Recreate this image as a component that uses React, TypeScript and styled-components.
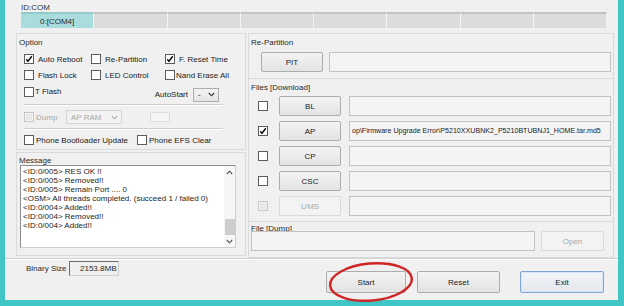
import React from 'react';
import styled, { createGlobalStyle } from 'styled-components';

const Global = createGlobalStyle`
  html, body { margin: 0; padding: 0; background: #f0f0f0; }
  body {
    width: 624px; height: 306px; overflow: hidden;
    font-family: "Liberation Sans", Arial, sans-serif;
    font-size: 8px; color: #1b1b1b;
  }
  * { box-sizing: border-box; }
`;

const TEAL = '#41c6c8';

const Frame = styled.div`
  width: 624px;
  height: 306px;
  border-left: 5px solid ${TEAL};
  border-right: 6px solid ${TEAL};
  border-bottom: 6px solid ${TEAL};
  background: #f0f0f0;
  display: flex;
  flex-direction: column;
  line-height: 9px;
`;

const Top = styled.div`
  height: 28px;
  padding: 3px 0 0 16px;
  display: flex;
  flex-direction: column;
`;

const SmallLabel = styled.div`
  height: 9px;
  line-height: 9px;
  color: #333;
`;

const ComRow = styled.div`
  display: grid;
  grid-template-columns: repeat(8, 1fr);
  width: 586px;
  height: 16px;
`;

const ComCell = styled.div<{ $active?: boolean }>`
  background: ${p => (p.$active ? '#a9dcdc' : '#dcdcdc')};
  border-top: 2px solid ${p => (p.$active ? '#94c9c9' : '#c2c2c2')};
  border-right: 1px solid #f4f4f4;
  display: flex;
  align-items: center;
  justify-content: center;
  color: #2a2a2a;
`;

const Main = styled.div`
  display: grid;
  grid-template-columns: 230px 366px;
  column-gap: 2px;
  padding-left: 11px;
  padding-top: 5px;
  height: 230px;
`;

const Column = styled.div`
  display: flex;
  flex-direction: column;
`;

const Panel = styled.div<{ $h: number; $pt?: number; $mt?: number; $noTop?: boolean }>`
  height: ${p => p.$h}px;
  margin-top: ${p => p.$mt ?? 0}px;
  border: 1px solid #dadada;
  ${p => (p.$noTop ? 'border-top: none;' : '')}
  padding: ${p => p.$pt ?? 4}px 2px 0 2px;
  display: flex;
  flex-direction: column;
`;

const PanelTitle = styled.div`
  height: 9px;
  line-height: 9px;
  color: #2a2a2a;
`;

const OptBody = styled.div`
  padding: 0 20px 0 5px;
  display: flex;
  flex-direction: column;
`;

const OptGrid = styled.div`
  margin-top: 4px;
  display: grid;
  grid-template-columns: 67px 74px minmax(0, 1fr);
  grid-template-rows: 16px 16px 17px;
  align-items: center;
`;

const CheckItem = styled.label<{ $gap?: number; $disabled?: boolean; $w?: number }>`
  display: flex;
  align-items: center;
  gap: ${p => p.$gap ?? 4}px;
  white-space: nowrap;
  color: ${p => (p.$disabled ? '#a6a6a6' : '#1b1b1b')};
  ${p => (p.$w ? `width: ${p.$w}px; flex: none;` : '')}
`;

const Box = styled.span<{ $disabled?: boolean }>`
  width: 10px;
  height: 10px;
  flex: none;
  border: 1px solid ${p => (p.$disabled ? '#c6c6c6' : '#5c5c5c')};
  background: ${p => (p.$disabled ? '#e8e8e8' : '#fff')};
  box-shadow: ${p => (p.$disabled ? 'inset 0 0 0 1px #f4f4f4' : 'none')};
  display: inline-flex;
  align-items: center;
  justify-content: center;
`;

function Check({ checked, disabled }: { checked?: boolean; disabled?: boolean }) {
  return (
    <Box $disabled={disabled}>
      {checked && (
        <svg width="8" height="8" viewBox="0 0 8 8">
          <path d="M1.2 4.2 L3 6.2 L6.8 1.2" stroke="#111" strokeWidth="1.5" fill="none" />
        </svg>
      )}
    </Box>
  );
}

const AutoStartWrap = styled.div`
  grid-column: 2 / 4;
  justify-self: end;
  display: flex;
  align-items: center;
  gap: 5px;
  margin-right: 4px;
  margin-top: 6px;
`;

const Select = styled.div<{ $w: number; $disabled?: boolean }>`
  width: ${p => p.$w}px;
  height: 14px;
  border: 1px solid ${p => (p.$disabled ? '#d6d6d6' : '#acacac')};
  background: ${p => (p.$disabled ? '#f2f2f2' : 'linear-gradient(#f4f4f4, #e4e4e4)')};
  color: ${p => (p.$disabled ? '#a8a8a8' : '#1b1b1b')};
  display: flex;
  align-items: center;
  justify-content: space-between;
  padding: 0 3px 0 4px;
`;

const Chevron = ({ color = '#333' }: { color?: string }) => (
  <svg width="7" height="5" viewBox="0 0 7 5">
    <path d="M0.8 1 L3.5 3.8 L6.2 1" stroke={color} strokeWidth="1.1" fill="none" />
  </svg>
);

const Sep = styled.div`
  height: 2px;
  border-top: 1px solid #cdcdcd;
  border-bottom: 1px solid #ffffff;
  margin-top: 4px;
`;

const Row = styled.div<{ $h?: number; $mt?: number }>`
  display: flex;
  align-items: center;
  height: ${p => p.$h ?? 14}px;
  margin-top: ${p => p.$mt ?? 0}px;
`;

const EmptyBox = styled.div`
  width: 20px;
  height: 10px;
  margin-left: 28px;
  border: 1px solid #dedede;
  background: #f4f4f4;
`;

const MsgBox = styled.div`
  margin: 0 0 0 1px;
  width: 216px;
  height: 83px;
  border: 1px solid #8d8d8d;
  border-right-color: #cfcfcf;
  border-bottom-color: #cfcfcf;
  background: #fff;
  display: flex;
`;

const MsgText = styled.div`
  flex: 1;
  padding: 1px 0 0 2px;
  line-height: 9px;
  white-space: nowrap;
  overflow: hidden;
  color: #1e1e1e;
`;

const ScrollBar = styled.div`
  width: 11px;
  background: #f6f6f6;
  display: flex;
  flex-direction: column;
  align-items: center;
  justify-content: space-between;
  padding: 4px 0 3px;
`;

const Thumb = styled.div`
  width: 10px;
  height: 16px;
  background: #cdcdcd;
  margin-top: auto;
  margin-bottom: 4px;
`;

const BtnRow = styled.div<{ $pl: number; $mt?: number }>`
  display: flex;
  align-items: center;
  padding-left: ${p => p.$pl}px;
  margin-top: ${p => p.$mt ?? 0}px;
  height: 20px;
`;

const Button = styled.div<{ $w: number; $h?: number; $disabled?: boolean; $default?: boolean; $ml?: number }>`
  width: ${p => p.$w}px;
  height: ${p => p.$h ?? 20}px;
  margin-left: ${p => p.$ml ?? 0}px;
  flex: none;
  border: 1px solid ${p => (p.$disabled ? '#d9d9d9' : p.$default ? '#7fa6d2' : '#adadad')};
  border-radius: 2px;
  background: ${p =>
    p.$disabled
      ? '#f3f3f3'
      : p.$default
      ? 'linear-gradient(#f2f5f8, #e3e8ee)'
      : 'linear-gradient(#f3f3f3, #e3e3e3)'};
  box-shadow: ${p => (p.$default ? 'inset 0 0 0 1px #d6e6f6' : 'none')};
  color: ${p => (p.$disabled ? '#a8a8a8' : '#1b1b1b')};
  display: flex;
  align-items: center;
  justify-content: center;
  position: relative;
`;

const Field = styled.div<{ $w: number; $ml: number }>`
  width: ${p => p.$w}px;
  height: 20px;
  margin-left: ${p => p.$ml}px;
  border: 1px solid #c3c3c3;
  background: #f4f4f4;
  display: flex;
  align-items: center;
  padding-left: 2px;
  white-space: nowrap;
  overflow: hidden;
  font-size: 7.1px;
  color: #222;
`;

const FileRows = styled.div`
  margin-top: 4px;
  display: flex;
  flex-direction: column;
  gap: 5px;
`;

const FileRow = styled.div`
  display: flex;
  align-items: center;
  height: 20px;
  padding-left: 7px;
`;

const CheckSlot = styled.div`
  width: 21px;
  flex: none;
  display: flex;
`;

const Bottom = styled.div`
  flex: 1;
  border-top: 1px solid #d2d2d2;
  box-shadow: inset 0 1px 0 #fff;
  display: flex;
  align-items: flex-start;
`;

const BinaryWrap = styled.div`
  display: flex;
  align-items: center;
  gap: 3px;
  padding-left: 21px;
  margin-top: 2px;
  color: #2a2a2a;
`;

const BinaryBox = styled.div`
  width: 50px;
  height: 15px;
  border: 1px solid #cfcfcf;
  border-left-color: #6d6d6d;
  border-top-color: #6d6d6d;
  display: flex;
  align-items: center;
  justify-content: flex-end;
  padding-right: 2px;
`;

const Actions = styled.div`
  margin-left: auto;
  margin-right: 14px;
  margin-top: 12px;
  display: flex;
  gap: 11px;
`;

const Ring = styled.svg`
  position: absolute;
  left: -1px;
  top: -12px;
  width: 90px;
  height: 44px;
  overflow: visible;
  pointer-events: none;
`;

const messages = [
  '<ID:0/005> RES OK !!',
  '<ID:0/005> Removed!!',
  '<ID:0/005> Remain Port ....  0',
  '<OSM> All threads completed. (succeed 1 / failed 0)',
  '<ID:0/004> Added!!',
  '<ID:0/004> Removed!!',
  '<ID:0/004> Added!!',
];

const files = [
  { name: 'BL', checked: false, text: '' },
  { name: 'AP', checked: true, text: 'op\\Firmware Upgrade Error\\P5210XXUBNK2_P5210BTUBNJ1_HOME.tar.md5' },
  { name: 'CP', checked: false, text: '' },
  { name: 'CSC', checked: false, text: '' },
  { name: 'UMS', checked: false, text: '', disabled: true },
];

export default function App() {
  return (
    <>
      <Global />
      <Frame>
        <Top>
          <SmallLabel>ID:COM</SmallLabel>
          <ComRow>
            <ComCell $active>0:[COM4]</ComCell>
            {Array.from({ length: 7 }).map((_, i) => (
              <ComCell key={i} />
            ))}
          </ComRow>
        </Top>
        <Main>
          <Column>
            <Panel $h={117}>
              <PanelTitle>Option</PanelTitle>
              <OptBody>
                <OptGrid>
                  <CheckItem><Check checked />Auto Reboot</CheckItem>
                  <CheckItem><Check />Re-Partition</CheckItem>
                  <CheckItem><Check checked />F. Reset Time</CheckItem>
                  <CheckItem><Check />Flash Lock</CheckItem>
                  <CheckItem><Check />LED Control</CheckItem>
                  <CheckItem $gap={1}><Check />Nand Erase All</CheckItem>
                  <CheckItem $gap={1}><Check />T Flash</CheckItem>
                  <AutoStartWrap>
                    AutoStart
                    <Select $w={26}>-<Chevron /></Select>
                  </AutoStartWrap>
                </OptGrid>
                <Sep />
                <Row $mt={4}>
                  <CheckItem $disabled $w={42} $gap={2}>
                    <Check disabled />Dump
                  </CheckItem>
                  <Select $w={56} $disabled>AP RAM<Chevron color="#b0b0b0" /></Select>
                  <EmptyBox />
                </Row>
                <Sep />
                <Row $mt={3}>
                  <CheckItem $w={113} $gap={2}><Check />Phone Bootloader Update</CheckItem>
                  <CheckItem $gap={2}><Check />Phone EFS Clear</CheckItem>
                </Row>
              </OptBody>
            </Panel>
            <Panel $h={104} $pt={3} $mt={2}>
              <PanelTitle>Message</PanelTitle>
              <MsgBox>
                <MsgText>
                  {messages.map((m, i) => (
                    <div key={i}>{m}</div>
                  ))}
                </MsgText>
                <ScrollBar>
                  <svg width="7" height="5" viewBox="0 0 7 5">
                    <path d="M0.8 4 L3.5 1.2 L6.2 4" stroke="#555" strokeWidth="1.1" fill="none" />
                  </svg>
                  <Thumb />
                  <Chevron color="#555" />
                </ScrollBar>
              </MsgBox>
            </Panel>
          </Column>
          <Column>
            <Panel $h={46}>
              <PanelTitle>Re-Partition</PanelTitle>
              <BtnRow $pl={10} $mt={5}>
                <Button $w={62}>PIT</Button>
                <Field $w={282} $ml={6} />
              </BtnRow>
            </Panel>
            <Panel $h={143} $noTop>
              <PanelTitle>Files [Download]</PanelTitle>
              <FileRows>
                {files.map(f => (
                  <FileRow key={f.name}>
                    <CheckSlot>
                      <Check checked={f.checked} disabled={f.disabled} />
                    </CheckSlot>
                    <Button $w={62} $disabled={f.disabled}>{f.name}</Button>
                    <Field $w={262} $ml={8}>{f.text}</Field>
                  </FileRow>
                ))}
              </FileRows>
            </Panel>
            <Panel $h={36} $pt={2} $noTop>
              <PanelTitle>File [Dump]</PanelTitle>
              <BtnRow $pl={0} $mt={-2}>
                <Field $w={284} $ml={0} />
                <Button $w={63} $disabled $ml={6}>Open</Button>
              </BtnRow>
            </Panel>
          </Column>
        </Main>
        <Bottom>
          <BinaryWrap>
            Binary Size
            <BinaryBox>2153.8MB</BinaryBox>
          </BinaryWrap>
          <Actions>
            <Button $w={80} $h={22}>
              Start
              <Ring viewBox="0 0 90 44">
                <ellipse
                  cx="45"
                  cy="22"
                  rx="41"
                  ry="18.5"
                  transform="rotate(-5 45 22)"
                  fill="none"
                  stroke="#cf2626"
                  strokeWidth="2.5"
                />
              </Ring>
            </Button>
            <Button $w={83} $h={22}>Reset</Button>
            <Button $w={84} $h={22} $default $ml={9}>Exit</Button>
          </Actions>
        </Bottom>
      </Frame>
    </>
  );
}
